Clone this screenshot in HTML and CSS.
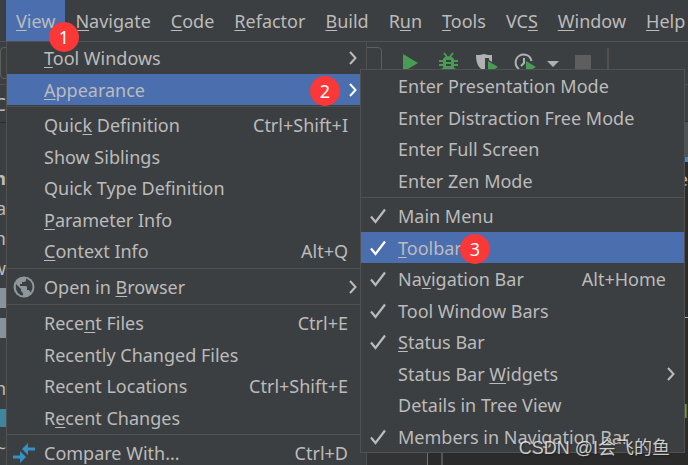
FILE: index.html
```html
<!DOCTYPE html>
<html lang="en">
<head>
  <meta charset="UTF-8">
  <title>View menu</title>
  <link rel="stylesheet" href="styles.css">
</head>
<body>
  <svg class="sprite" aria-hidden="true">
    <symbol id="check" viewBox="0 0 16 16"><path d="M1 8.5 L5.5 14 L15 1.5" fill="none" stroke="currentColor" stroke-width="2.2"/></symbol>
    <symbol id="arrow" viewBox="0 0 8 14"><path d="M1 1 L6.5 7 L1 13" fill="none" stroke="currentColor" stroke-width="2"/></symbol>
  </svg>

  <nav class="menubar">
    <div class="menubar-item">
      <button class="menu-title open"><u>V</u>iew</button>
      <span class="badge badge-view">1</span>

      <div class="menu main-menu">
        <ul>
          <li><button class="item"><span><u>T</u>ool Windows</span><svg class="arrow"><use href="#arrow"/></svg></button></li>
          <li>
            <button class="item selected"><span><u>A</u>ppearance</span><svg class="arrow"><use href="#arrow"/></svg></button>
            <span class="badge badge-appearance">2</span>

            <div class="menu submenu">
              <ul>
                <li><button class="item">Enter Presentation Mode</button></li>
                <li><button class="item">Enter Distraction Free Mode</button></li>
                <li><button class="item">Enter Full Screen</button></li>
                <li><button class="item">Enter Zen Mode</button></li>
              </ul>
              <hr>
              <ul>
                <li><button class="item"><svg class="check"><use href="#check"/></svg>Main Menu</button></li>
                <li>
                  <button class="item selected"><svg class="check"><use href="#check"/></svg><span><u>T</u>oolbar</span></button>
                  <span class="badge badge-toolbar">3</span>
                </li>
                <li><button class="item"><svg class="check"><use href="#check"/></svg><span>Na<u>v</u>igation Bar</span><kbd>Alt+Home</kbd></button></li>
                <li><button class="item"><svg class="check"><use href="#check"/></svg>Tool Window Bars</button></li>
                <li><button class="item"><svg class="check"><use href="#check"/></svg><span><u>S</u>tatus Bar</span></button></li>
                <li><button class="item"><span>Status Bar <u>W</u>idgets</span><svg class="arrow"><use href="#arrow"/></svg></button></li>
                <li><button class="item">Details in Tree View</button></li>
                <li><button class="item"><svg class="check"><use href="#check"/></svg>Members in Navigation Bar</button></li>
              </ul>
            </div>
          </li>
        </ul>
        <hr>
        <ul>
          <li><button class="item"><span>Quic<u>k</u> Definition</span><kbd>Ctrl+Shift+I</kbd></button></li>
          <li><button class="item">Show Siblings</button></li>
          <li><button class="item">Quick Type Definition</button></li>
          <li><button class="item"><span><u>P</u>arameter Info</span></button></li>
          <li><button class="item"><span><u>C</u>ontext Info</span><kbd>Alt+Q</kbd></button></li>
        </ul>
        <hr>
        <ul>
          <li>
            <button class="item">
              <svg class="icon" viewBox="0 0 22 22">
                <circle cx="11" cy="11" r="10.5" fill="#8e979c"/>
                <path d="M3 8 L8 13 V15 L10 17 V19.5 C5 19 2 14.5 3 8 Z M13 2.5 V4 C13 5 12 6 11 6 H9 V8 H7 V10 H13 L14 11 V14 H16 L17.5 16.5 C21 12 20 5 13 2.5 Z" fill="#3c3f41"/>
              </svg>
              <span>Open in <u>B</u>rowser</span>
              <svg class="arrow"><use href="#arrow"/></svg>
            </button>
          </li>
        </ul>
        <hr>
        <ul>
          <li><button class="item"><span>Rece<u>n</u>t Files</span><kbd>Ctrl+E</kbd></button></li>
          <li><button class="item">Recently Changed Files</button></li>
          <li><button class="item"><span>Recent Locations</span><kbd>Ctrl+Shift+E</kbd></button></li>
          <li><button class="item"><span>R<u>e</u>cent Changes</span></button></li>
        </ul>
        <hr>
        <ul>
          <li>
            <button class="item">
              <svg class="icon" viewBox="0 0 22 22" fill="#3592c4">
                <path d="M9 7 L15 1 V5.5 H22 V8.5 H15 V13 Z"/>
                <path d="M13 15 L7 9 V13.5 H0 V16.5 H7 V21 Z"/>
              </svg>
              <span>Compare With...</span>
              <kbd>Ctrl+D</kbd>
            </button>
          </li>
        </ul>
      </div>
    </div>
    <button class="menu-title"><u>N</u>avigate</button>
    <button class="menu-title"><u>C</u>ode</button>
    <button class="menu-title"><u>R</u>efactor</button>
    <button class="menu-title"><u>B</u>uild</button>
    <button class="menu-title">R<u>u</u>n</button>
    <button class="menu-title"><u>T</u>ools</button>
    <button class="menu-title">VC<u>S</u></button>
    <button class="menu-title"><u>W</u>indow</button>
    <button class="menu-title"><u>H</u>elp</button>
  </nav>

  <div class="toolbar">
    <div class="run-config"></div>
    <button class="tool" aria-label="Run">
      <svg width="22" height="22"><path d="M2 2 L17 11 L2 20 Z" fill="#499c54"/></svg>
    </button>
    <button class="tool" aria-label="Debug">
      <svg width="22" height="22" fill="none" stroke="#499c54" stroke-width="2">
        <path d="M6 1 L9 5 M15 1 L12 5 M1 9 H20 M1 13 H20 M2 19 L6 16 M19 19 L15 16"/>
        <path d="M5 8 C5 3 16 3 16 8 V14 C16 21 5 21 5 14 Z" fill="#499c54" stroke="none"/>
        <path d="M8 9 H13 M8 13 H13" stroke="#3c3f41"/>
      </svg>
    </button>
    <button class="tool" aria-label="Coverage">
      <svg width="24" height="22">
        <path d="M1 3 C4 3 6 3 9 2 C12 3 14 3 17 3 V6 H10 V19 C4 17 1 12 1 3 Z" fill="#afb1b3"/>
        <path d="M14 5 H17 V10 L14 8 Z" fill="#afb1b3"/>
        <path d="M13 9 L23 15 L13 21 Z" fill="#499c54"/>
      </svg>
    </button>
    <button class="tool" aria-label="Profiler">
      <svg width="22" height="22">
        <path d="M5 17 A8 8 0 1 1 17.5 9 M10 6 V11 L7 14" fill="none" stroke="#afb1b3" stroke-width="2"/>
        <path d="M12 9 L22 15 L12 21 Z" fill="#499c54"/>
      </svg>
      <svg width="12" height="8"><path d="M0 2 H12 L6 8 Z" fill="#afb1b3"/></svg>
    </button>
    <button class="tool" aria-label="Stop">
      <svg width="18" height="18"><path d="M1 1 H17 V17 H1 Z" fill="#5e5e5e"/></svg>
    </button>
    <span class="divider"></span>
  </div>

  <main class="workspace">
    <aside class="project">
      <div class="crumb">C</div>
      <b>n</b>
      <span>ea</span>
      <span>rn</span>
      <span>w</span>
      <i class="library"></i>
      <i class="library"></i>
      <span></span>
      <span>n</span>
      <i class="folder"></i>
      <span>~</span>
    </aside>
    <div class="gutter"></div>
    <div class="editor">
      <div class="nav-row"></div>
      <div class="tab"></div>
      <div class="code">e</div>
      <div class="method-line"></div>
      <div class="code string">d</div>
    </div>
  </main>

  <div class="watermark">CSDN @I会飞的鱼</div>
</body>
</html>
```
FILE: styles.css
```css
* {
  box-sizing: border-box;
}

body {
  margin: 0;
  height: 100vh;
  overflow: hidden;
  display: flex;
  flex-direction: column;
  background: #3c3f41;
  color: #bbbbbb;
  font-family: "Noto Sans", "Noto Sans CJK SC", sans-serif;
  font-size: 18px;
}

button {
  font: inherit;
  color: inherit;
  background: none;
  border: none;
  padding: 0;
  white-space: nowrap;
}

u {
  text-decoration-thickness: 1px;
  text-underline-offset: 2px;
  text-decoration-skip-ink: none;
}

.sprite {
  position: absolute;
  width: 0;
  height: 0;
}

/* menu bar */
.menubar {
  display: flex;
  flex: none;
  height: 42px;
  padding-left: 6px;
  border-bottom: 1px solid #515151;
}

.menubar-item {
  position: relative;
  display: flex;
}

.menu-title {
  padding: 0 10px;
}

.menu-title.open,
.item.selected {
  background: #4b6eaf;
}

/* popup menus */
.menu {
  position: absolute;
  background: #3c3f41;
  border: 1px solid #515151;
}

.main-menu {
  top: 100%;
  left: 0;
  min-width: 361px;
  z-index: 1;
}

.submenu {
  top: -5px;
  left: calc(100% - 6px);
  min-width: 325px;
}

.menu ul {
  list-style: none;
  margin: 0;
  padding: 0;
}

.menu li {
  position: relative;
  display: flex;
  height: 32px;
}

.menu li:nth-child(even) {
  height: 31px;
}

.menu hr {
  margin: 1px 0 2px;
  border: none;
  border-top: 1px solid #515151;
}

.item {
  display: flex;
  align-items: center;
  width: 100%;
  padding: 0 18px 0 37px;
  text-align: left;
}

.item .check {
  width: 16px;
  height: 16px;
  margin: 0 12px 0 -28px;
}

.item .icon {
  width: 22px;
  height: 22px;
  margin: 0 9px 0 -31px;
}

.item .arrow {
  width: 8px;
  height: 14px;
  margin: 0 -9px 0 auto;
}

.item.selected svg {
  color: #ffffff;
}

.item kbd {
  margin-left: auto;
  font: inherit;
}

/* numbered markers */
.badge {
  position: absolute;
  z-index: 2;
  width: 30px;
  height: 30px;
  border-radius: 50%;
  background: #fb3838;
  color: #ffffff;
  line-height: 30px;
  text-align: center;
}

.badge-view {
  top: 22px;
  left: 43px;
}

.badge-appearance {
  top: 2px;
  right: 26px;
}

.badge-toolbar {
  top: 2px;
  left: 99px;
}

/* toolbar */
.toolbar {
  display: flex;
  flex: none;
  align-items: center;
  gap: 15px;
  height: 43px;
  border-bottom: 1px solid #515151;
}

.run-config {
  width: 382px;
  height: 32px;
  margin-right: 4px;
  border: 1px solid #5e6060;
  border-radius: 4px;
}

.tool {
  display: flex;
  align-items: center;
  gap: 11px;
}

.divider {
  width: 2px;
  height: 30px;
  background: #515151;
}

/* area behind the menus */
.workspace {
  display: flex;
  flex: 1;
  min-height: 0;
}

.project {
  display: flex;
  flex-direction: column;
  width: 367px;
  border-right: 1px solid #515151;
}

.project > * {
  display: flex;
  flex: none;
  justify-content: flex-end;
  align-items: center;
  width: 6px;
  height: 30px;
  overflow: hidden;
}

.project .crumb {
  height: 38px;
  margin-bottom: 40px;
  border-bottom: 1px solid #2b2b2b;
}

.project .library {
  height: 20px;
  margin: 5px 0;
  background: #87939a;
}

.project .folder {
  height: 18px;
  margin: 6px 0;
  background: #3e86a0;
}

.gutter {
  width: 76px;
  background: linear-gradient(90deg, #313335 60px, #548270 60px, #548270 61px, #2b2b2b 61px);
  border-right: 2px solid #555555;
}

.editor {
  flex: 1;
  background: #2b2b2b;
  text-align: right;
}

.nav-row {
  height: 37px;
  background: #3c3f41;
  border-bottom: 1px solid #323232;
}

.tab {
  height: 40px;
  background: #4e5254;
  border-bottom: 5px solid #4a88c7;
}

.code {
  height: 36px;
  line-height: 34px;
}

.method-line {
  height: 120px;
  border-bottom: 1px solid #a9b7c6;
}

.code.string {
  margin-top: 76px;
  color: #6a9955;
}

.watermark {
  position: absolute;
  right: 18px;
  bottom: 4px;
  z-index: 3;
  color: rgba(255, 255, 255, 0.75);
  font-family: "Liberation Sans", "Noto Sans CJK SC", sans-serif;
  font-size: 18px;
  line-height: 26px;
  text-shadow: 1px 1px 1px #222222;
}
```
